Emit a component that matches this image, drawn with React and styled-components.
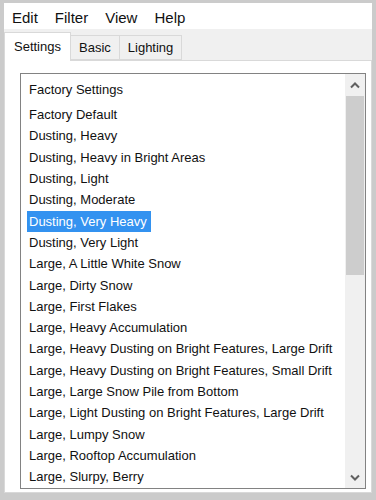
import styled, { createGlobalStyle } from "styled-components";

const GlobalStyle = createGlobalStyle`
    html, body {
        margin: 0;
        padding: 0;
        background: #cbcbcb;
    }
    * {
        box-sizing: border-box;
    }
`;

const Frame = styled.div`
    width: 376px;
    height: 500px;
    background: #cbcbcb;
    padding: 3px 4px 7px 4px;
    display: flex;
    flex-direction: column;
    font-family: "Liberation Sans", Arial, sans-serif;
    color: #111;
`;

const MenuBar = styled.div`
    height: 26px;
    flex-shrink: 0;
    background: #fff;
    display: flex;
    align-items: center;
    padding-left: 8px;
`;

const MenuItem = styled.span`
    font-size: 15px;
    margin-right: 17px;
    padding-top: 3px;
`;

const TabStrip = styled.div`
    height: 31px;
    flex-shrink: 0;
    background: #f0f0f0;
    display: flex;
    align-items: flex-end;
`;

const Tab = styled.div`
    height: ${(p) => (p.$active ? "29px" : "25px")};
    padding: 0 ${(p) => (p.$active ? "9px" : "8px")};
    font-size: 13px;
    display: flex;
    align-items: center;
    padding-bottom: ${(p) => (p.$active ? "2px" : "0")};
    background: ${(p) => (p.$active ? "#fff" : "#f0f0f0")};
    border: 1px solid #d9d9d9;
    border-bottom: ${(p) => (p.$active ? "none" : "1px solid #d9d9d9")};
    margin-right: -1px;
    position: relative;
    z-index: ${(p) => (p.$active ? 2 : 1)};
    margin-bottom: ${(p) => (p.$active ? "-1px" : "0")};
`;

const Page = styled.div`
    flex: 1;
    min-height: 0;
    background: #fff;
    border: 1px solid #d9d9d9;
    padding: 12px 5px 3px 15px;
    display: flex;
`;

const ListBox = styled.div`
    flex: 1;
    min-height: 0;
    border: 1px solid #828282;
    display: flex;
    overflow: hidden;
`;

const Items = styled.div`
    flex: 1;
    overflow: hidden;
`;

const Header = styled.div`
    height: 30px;
    font-size: 13px;
    display: flex;
    align-items: center;
    padding-left: 8px;
    padding-top: 1px;
`;

const Row = styled.div`
    height: 21.3px;
    display: flex;
    align-items: center;
    padding-left: 6px;
    font-size: 13px;
    white-space: nowrap;
`;

const Label = styled.span`
    padding: 3px 4px 3px 2px;
    background: ${(p) => (p.$selected ? "#3392f0" : "transparent")};
    color: ${(p) => (p.$selected ? "#fff" : "#111")};
`;

const ScrollBar = styled.div`
    width: 20px;
    background: #f0f0f0;
    display: flex;
    flex-direction: column;
`;

const Arrow = styled.div`
    height: 22px;
    flex-shrink: 0;
    display: flex;
    align-items: center;
    justify-content: center;
`;

const Track = styled.div`
    flex: 1;
    display: flex;
    flex-direction: column;
`;

const Thumb = styled.div`
    height: 179px;
    margin: 0 1px;
    background: #cdcdcd;
`;

const Chevron = ({ down }) => (
    <svg width="10" height="7" viewBox="0 0 10 7">
        <path
            d={down ? "M1 1.5 L5 5.5 L9 1.5" : "M1 5.5 L5 1.5 L9 5.5"}
            fill="none"
            stroke="#606060"
            strokeWidth="2"
        />
    </svg>
);

const presets = [
    "Factory Default",
    "Dusting, Heavy",
    "Dusting, Heavy in Bright Areas",
    "Dusting, Light",
    "Dusting, Moderate",
    "Dusting, Very Heavy",
    "Dusting, Very Light",
    "Large, A Little White Snow",
    "Large, Dirty Snow",
    "Large, First Flakes",
    "Large, Heavy Accumulation",
    "Large, Heavy Dusting on Bright Features, Large Drift",
    "Large, Heavy Dusting on Bright Features, Small Drift",
    "Large, Large Snow Pile from Bottom",
    "Large, Light Dusting on Bright Features, Large Drift",
    "Large, Lumpy Snow",
    "Large, Rooftop Accumulation",
    "Large, Slurpy, Berry",
];

const App = () => {
    return (
        <Frame>
            <GlobalStyle />
            <MenuBar>
                <MenuItem>Edit</MenuItem>
                <MenuItem>Filter</MenuItem>
                <MenuItem>View</MenuItem>
                <MenuItem>Help</MenuItem>
            </MenuBar>
            <TabStrip>
                <Tab $active>Settings</Tab>
                <Tab>Basic</Tab>
                <Tab>Lighting</Tab>
            </TabStrip>
            <Page>
                <ListBox>
                    <Items>
                        <Header>Factory Settings</Header>
                        {presets.map((p) => (
                            <Row key={p}>
                                <Label $selected={p === "Dusting, Very Heavy"}>{p}</Label>
                            </Row>
                        ))}
                    </Items>
                    <ScrollBar>
                        <Arrow>
                            <Chevron />
                        </Arrow>
                        <Track>
                            <Thumb />
                        </Track>
                        <Arrow>
                            <Chevron down />
                        </Arrow>
                    </ScrollBar>
                </ListBox>
            </Page>
        </Frame>
    );
};

export default App;
